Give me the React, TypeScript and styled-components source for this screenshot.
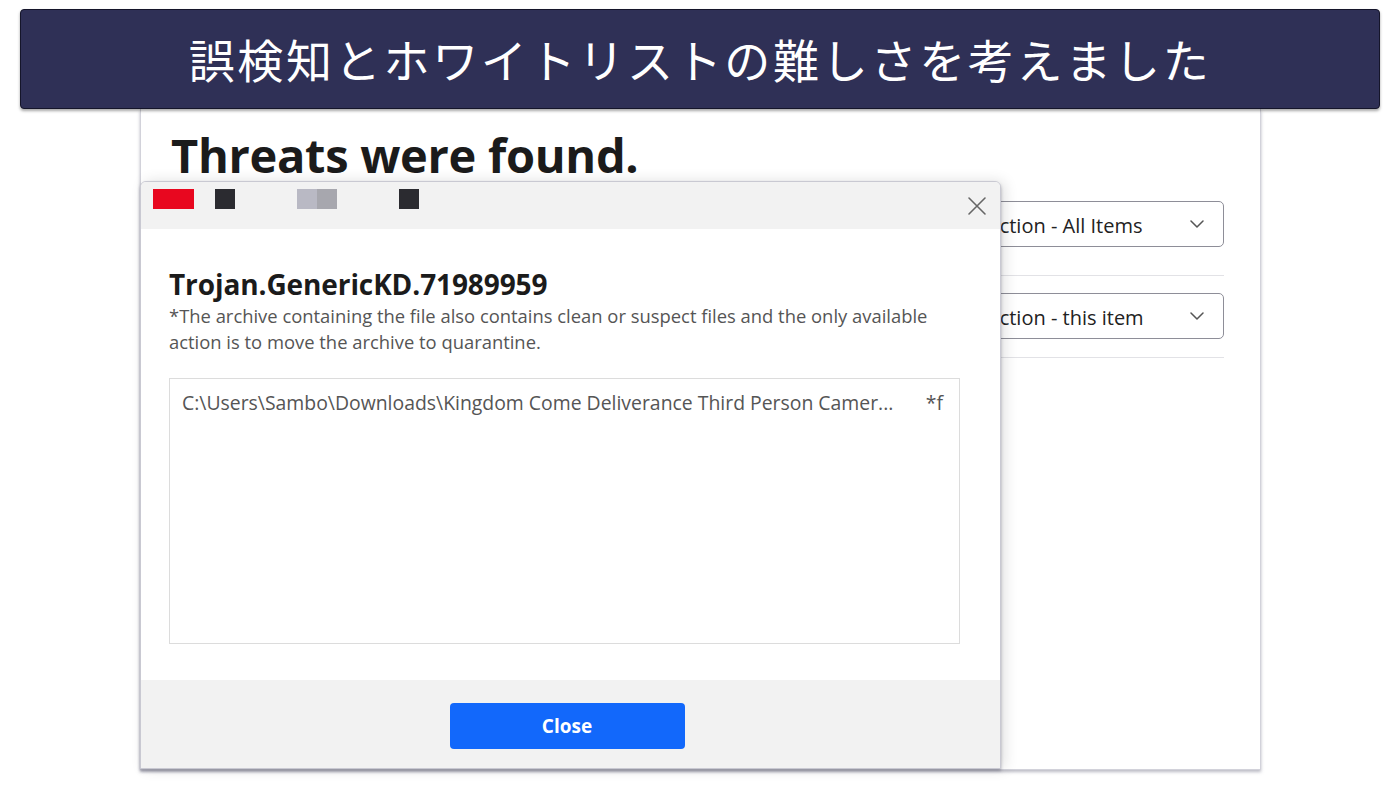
import { createGlobalStyle, styled } from "styled-components";

const GlobalStyle = createGlobalStyle`
  html, body {
    margin: 0;
    padding: 0;
    background: #ffffff;
  }
  body {
    font-family: "Open Sans", "Noto Sans", "Noto Sans CJK JP", sans-serif;
  }
`;

const ChevronDown = () => (
  <svg width="14" height="8" viewBox="0 0 14 8" fill="none">
    <path d="M1 1L7 7L13 1" stroke="#555" strokeWidth="1.5" strokeLinecap="round" strokeLinejoin="round" />
  </svg>
);

const CloseIcon = () => (
  <svg width="20" height="20" viewBox="0 0 20 20" fill="none">
    <path d="M2 2L18 18M18 2L2 18" stroke="#666" strokeWidth="1.6" strokeLinecap="round" />
  </svg>
);

const App = () => {
  return (
    <>
      <GlobalStyle />
      <StPage>
        <StBanner>
          <StBannerText>誤検知とホワイトリストの難しさを考えました</StBannerText>
        </StBanner>

        <StWindow>
          <StThreatsTitle>Threats were found.</StThreatsTitle>
          <StActions>
            <StSelect>
              <span>Action - All Items</span>
              <ChevronDown />
            </StSelect>
            <StDivider />
            <StSelect>
              <span>Action - this item</span>
              <ChevronDown />
            </StSelect>
            <StDivider />
          </StActions>

          <StDialog>
            <StDialogHeader>
              <StRedact color="#e8071f" w={41} />
              <StRedact color="#2b2b30" w={20} gap={21} />
              <StRedact color="#b9b9c4" w={20} gap={62} />
              <StRedact color="#a7a7ae" w={20} />
              <StRedact color="#2b2b30" w={20} gap={62} />
              <StCloseBtn>
                <CloseIcon />
              </StCloseBtn>
            </StDialogHeader>

            <StDialogBody>
              <StThreatName>Trojan.GenericKD.71989959</StThreatName>
              <StNote>
                *The archive containing the file also contains clean or suspect files and the only available
                action is to move the archive to quarantine.
              </StNote>
              <StFileList>
                <StFileRow>
                  <StFilePath>
                    C:\Users\Sambo\Downloads\Kingdom Come Deliverance Third Person Camer...
                  </StFilePath>
                  <StFileFlag>*f</StFileFlag>
                </StFileRow>
              </StFileList>
            </StDialogBody>

            <StDialogFooter>
              <StPrimaryBtn>Close</StPrimaryBtn>
            </StDialogFooter>
          </StDialog>
        </StWindow>
      </StPage>
    </>
  );
};

export default App;

const StPage = styled.div`
  width: 1400px;
  height: 787px;
  display: flex;
  flex-direction: column;
  align-items: center;
  padding-top: 9px;
  box-sizing: border-box;
  overflow: hidden;
`;

const StBanner = styled.div`
  position: relative;
  z-index: 3;
  width: 1360px;
  height: 100px;
  box-sizing: border-box;
  background: #2f3056;
  border: 1px solid #15152a;
  border-radius: 4px;
  box-shadow: 0 2px 3px rgba(0, 0, 0, 0.35);
  display: flex;
  align-items: center;
  justify-content: center;
`;

const StBannerText = styled.div`
  font-family: "Noto Sans CJK JP", "Noto Sans", sans-serif;
  font-size: 46px;
  font-weight: 400;
  color: #ffffff;
  letter-spacing: 2.7px;
  margin-top: -2px;
`;

const StWindow = styled.div`
  position: relative;
  width: 1121px;
  height: 661px;
  box-sizing: border-box;
  margin-left: 1px;
  background: #ffffff;
  border: 1px solid #d2d2da;
  border-top: none;
  box-shadow: 0 2px 3px rgba(120, 120, 140, 0.5);
  display: flex;
  flex-direction: column;
  padding: 14px 36px 0 30px;
`;

const StThreatsTitle = styled.h1`
  margin: 0;
  font-family: "Open Sans", sans-serif;
  font-size: 47px;
  line-height: 64px;
  font-weight: 700;
  color: #1b1b1b;
  letter-spacing: -0.3px;
`;

const StActions = styled.div`
  align-self: flex-end;
  width: 252px;
  display: flex;
  flex-direction: column;
  margin-top: 14px;
`;

const StSelect = styled.div`
  height: 46px;
  box-sizing: border-box;
  border: 1px solid #8e8e98;
  border-radius: 5px;
  display: flex;
  align-items: center;
  justify-content: space-between;
  padding: 0 19px 0 14px;
  font-family: "Open Sans", sans-serif;
  font-size: 20px;
  color: #222;
  span {
    margin-top: 2px;
  }
`;

const StDivider = styled.div`
  height: 1px;
  background: #e2e2e6;
  margin: 28px 0 17px;
  &:last-child {
    margin-bottom: 0;
    margin-top: 18px;
  }
`;

const StDialog = styled.div`
  position: absolute;
  left: -1px;
  top: 72px;
  width: 861px;
  height: 588px;
  box-sizing: border-box;
  z-index: 2;
  display: flex;
  flex-direction: column;
  background: #ffffff;
  border: 1px solid #c9c9d2;
  border-radius: 6px 6px 0 0;
  box-shadow: 4px 0 14px rgba(0, 0, 0, 0.12), 0 2px 3px rgba(100, 100, 120, 0.5);
  overflow: hidden;
`;

const StDialogHeader = styled.div`
  height: 47px;
  flex-shrink: 0;
  background: #f2f2f2;
  display: flex;
  align-items: flex-start;
  padding: 7px 0 0 12px;
  box-sizing: border-box;
`;

const StRedact = styled.span<{ color: string; w: number; gap?: number }>`
  display: block;
  width: ${(p) => p.w}px;
  height: 20px;
  background: ${(p) => p.color};
  margin-left: ${(p) => p.gap ?? 0}px;
`;

const StCloseBtn = styled.div`
  margin-left: auto;
  margin-right: 13px;
  margin-top: 7px;
  display: flex;
`;

const StDialogBody = styled.div`
  flex: 1;
  padding: 38px 40px 36px 28px;
  display: flex;
  flex-direction: column;
`;

const StThreatName = styled.h2`
  margin: 0;
  font-family: "Open Sans", sans-serif;
  font-size: 28px;
  line-height: 34px;
  font-weight: 700;
  color: #1b1b1b;
  letter-spacing: -0.1px;
`;

const StNote = styled.p`
  margin: 2px 0 0;
  font-family: "Open Sans", sans-serif;
  font-size: 18.4px;
  line-height: 26px;
  color: #555;
  width: 790px;
`;

const StFileList = styled.div`
  margin-top: 23px;
  flex: 1;
  border: 1px solid #dcdcdc;
  padding: 11px 16px 0 12px;
`;

const StFileRow = styled.div`
  display: flex;
  justify-content: space-between;
  font-family: "Open Sans", sans-serif;
  font-size: 19.4px;
  line-height: 26px;
  color: #555;
`;

const StFilePath = styled.span`
  white-space: nowrap;
`;

const StFileFlag = styled.span`
  white-space: nowrap;
`;

const StDialogFooter = styled.div`
  height: 88px;
  flex-shrink: 0;
  background: #f2f2f2;
  display: flex;
  justify-content: center;
  padding: 23px 7px 0 0;
  box-sizing: border-box;
`;

const StPrimaryBtn = styled.button`
  width: 235px;
  height: 46px;
  border: none;
  border-radius: 4px;
  background: #1268fb;
  color: #ffffff;
  font-family: "Open Sans", sans-serif;
  font-size: 19px;
  font-weight: 700;
  cursor: pointer;
`;
